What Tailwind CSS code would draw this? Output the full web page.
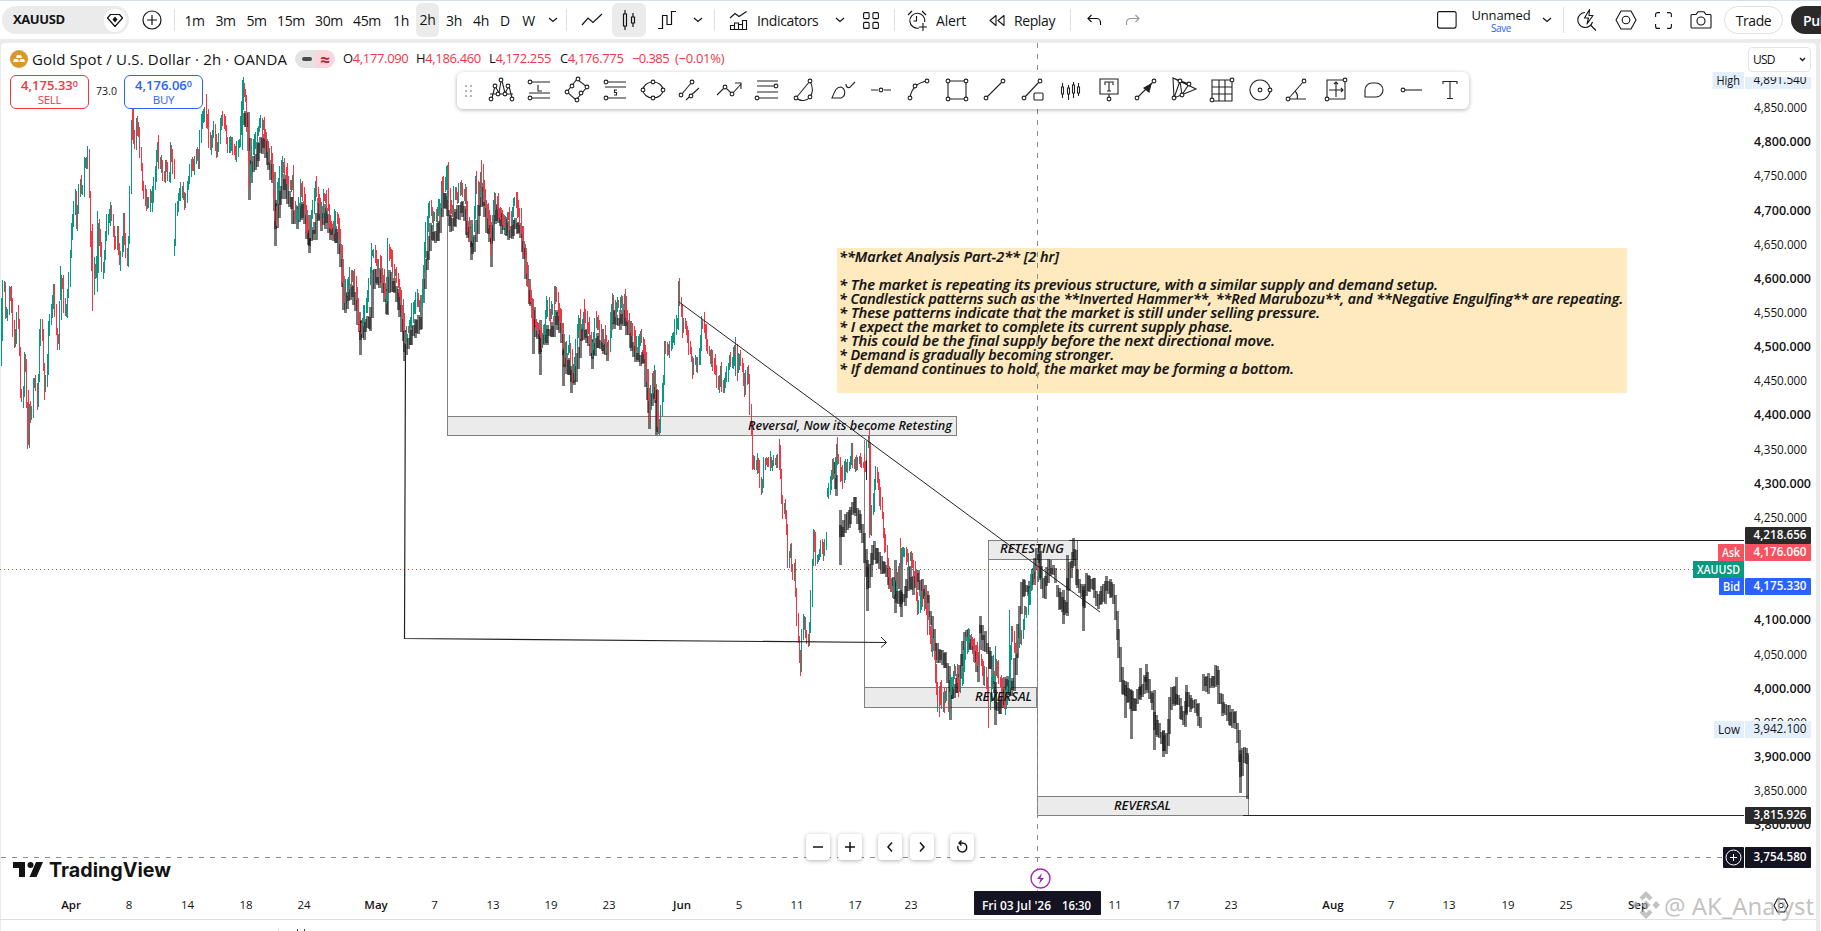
<!DOCTYPE html>
<html lang="en">
<head>
    <meta charset="UTF-8">
    <meta name="viewport" content="width=device-width, initial-scale=1.0">
    <script src="https://cdn.jsdelivr.net/npm/@tailwindcss/browser@4"></script>
    <title>XAUUSD 4,176.775 - TradingView</title>
</head>
<body class="w-[1821px] h-[931px] overflow-hidden bg-[#ebebeb] font-['Open_Sans',sans-serif] text-[#131313]">

<!-- top toolbar -->
<header class="h-[39px] flex items-center bg-white border-t border-[#d6deeb] text-[14px] font-medium tracking-[-0.4px] whitespace-nowrap overflow-hidden">
  <div class="ml-0.5 w-[127px] h-7 shrink-0 rounded-full bg-[#ebebeb] flex items-center justify-between pl-[11px] pr-[3px]">
    <span class="text-[13px] font-bold tracking-[-0.4px]">XAUUSD</span>
    <span class="w-[22px] h-[23px] rounded-full bg-white flex items-center justify-center">
      <svg width="18" height="18" viewBox="0 0 18 18" fill="none" stroke="#131313" stroke-width="1.2"><path d="M4.5 3.5h9l3 3.5L9 15.5 1.500 7z" stroke-linejoin="round"/><path d="M9 5.500l2.500 3L9 11.500 6.500 8.500z" fill="#131313" stroke="none"/></svg>
    </span>
  </div>
  <div class="w-[45px] shrink-0 flex justify-center">
    <svg width="20" height="20" viewBox="0 0 20 20" fill="none" stroke="#131313" stroke-width="1.2"><circle cx="10" cy="10" r="9"/><path d="M10 5v10M5 10h10"/></svg>
  </div>
  <div class="w-px h-[22px] bg-[#e0e0e0] shrink-0"></div>
  <div class="flex shrink-0 pl-1 text-center items-center">
    <span class="w-[31px]">1m</span><span class="w-[31px]">3m</span><span class="w-[31px]">5m</span>
    <span class="w-[38px]">15m</span><span class="w-[38px]">30m</span><span class="w-[38px]">45m</span>
    <span class="w-[30px]">1h</span>
    <span class="w-[23px] h-[34px] leading-[34px] rounded-md bg-[#ebebeb] font-medium">2h</span>
    <span class="w-[30px]">3h</span><span class="w-[24px]">4h</span><span class="w-[24px]">D</span><span class="w-[23px]">W</span>
  </div>
  <div class="w-[26px] flex justify-center shrink-0"><svg width="10" height="6" viewBox="0 0 10 6" fill="none" stroke="#131313" stroke-width="1.2"><path d="M1 1l4 3.500L9 1"/></svg></div>
  <div class="w-px h-[22px] bg-[#e0e0e0] shrink-0"></div>
  <div class="w-[45px] flex justify-center pl-1 shrink-0"><svg width="22" height="14" viewBox="0 0 22 14" fill="none" stroke="#131313" stroke-width="1.2"><path d="M1 12l6-7 5 4.500L21 1"/></svg></div>
  <div class="w-[34px] h-[34px] rounded-md bg-[#ebebeb] flex items-center justify-center shrink-0">
    <svg width="16" height="20" viewBox="0 0 16 20" fill="none" stroke="#131313" stroke-width="1.2"><path d="M2.500 4h3v12h-3zM4 0v4M4 16v4M10.500 7h3v6h-3zM12 3v4M12 13v4"/></svg>
  </div>
  <div class="w-[42px] flex justify-center shrink-0"><svg width="20" height="20" viewBox="0 0 20 20" fill="none" stroke="#131313" stroke-width="1.2"><path d="M1 18.500h4.500v-13h4.500v9h4.500V1.500H19"/></svg></div>
  <div class="w-[20px] flex justify-center shrink-0"><svg width="10" height="6" viewBox="0 0 10 6" fill="none" stroke="#131313" stroke-width="1.200"><path d="M1 1l4 3.500L9 1"/></svg></div>
  <div class="w-px h-[22px] ml-[6px] bg-[#e0e0e0] shrink-0"></div>
  <div class="ml-[14px] w-[104px] flex items-center gap-[9px] shrink-0">
    <svg width="19" height="19" viewBox="0 0 19 19" fill="none" stroke="#131313" stroke-width="1.1"><path d="M1 7l5-4.500 4 3L17.500.5M1.500 18.500v-4h4v4zM5.500 18.500v-6.500h4v6.500zM9.500 18.500v-5h4v5zM13.500 18.500v-9h4v9zM1 18.500h17"/></svg>
    <span class="text-[14px] tracking-[-0.35px]">Indicators</span>
  </div>
  <svg class="ml-[2px] shrink-0" width="10" height="6" viewBox="0 0 10 6" fill="none" stroke="#131313" stroke-width="1.2"><path d="M1 1l4 3.500L9 1"/></svg>
  <svg class="ml-[18px] shrink-0" width="16" height="17" viewBox="0 0 16 17" fill="none" stroke="#131313" stroke-width="1.1"><rect x=".6" y=".6" width="5.500" height="6" rx="1"/><rect x="9.900" y=".6" width="5.500" height="6" rx="1"/><rect x=".6" y="10.400" width="5.500" height="6" rx="1"/><rect x="9.900" y="10.400" width="5.500" height="6" rx="1"/></svg>
  <div class="w-px h-[22px] ml-[15px] bg-[#e0e0e0] shrink-0"></div>
  <svg class="ml-[12px] shrink-0" width="21" height="21" viewBox="0 0 21 21" fill="none" stroke="#131313" stroke-width="1.1"><path d="M12 18a7.500 7.500 0 1 1 5.700-6M9.500 6v5H6.500M1 5l4-4M15 1l4 4M16 13v8M12 17h8"/></svg>
  <span class="ml-[8px] w-[53px] shrink-0 tracking-[-0.2px]">Alert</span>
  <svg class="shrink-0" width="17" height="13" viewBox="0 0 17 13" fill="none" stroke="#131313" stroke-width="1.1"><path d="M7 1.500v10L1 6.500zM15 1.500v10L9 6.500z" stroke-linejoin="round"/></svg>
  <span class="ml-[8px] w-[56px] shrink-0">Replay</span>
  <div class="w-px h-[22px] bg-[#e0e0e0] shrink-0"></div>
  <svg class="ml-[16px] shrink-0" width="15" height="12" viewBox="0 0 15 12" fill="none" stroke="#131313" stroke-width="1.200"><path d="M4.500 1L1 4.500 4.500 8M1 4.500h8.500a4 4 0 0 1 4 4V11"/></svg>
  <svg class="ml-[23px] shrink-0" width="15" height="12" viewBox="0 0 15 12" fill="none" stroke="#999" stroke-width="1.200"><path d="M10.500 1L14 4.500 10.500 8M14 4.500H5.500a4 4 0 0 0-4 4V11"/></svg>
  <div class="ml-auto w-[384px] shrink-0 flex items-center">
    <svg class="shrink-0" width="20" height="18" viewBox="0 0 20 18" fill="none" stroke="#131313" stroke-width="1.100"><rect x=".6" y=".6" width="18.500" height="16.500" rx="2"/></svg>
    <div class="ml-[10px] w-[66px] pl-[2px] shrink-0 flex flex-col items-center">
      <span class="text-[13px] leading-[15px] tracking-[-0.100px]">Unnamed</span>
      <span class="text-[10px] leading-[10px] text-[#2962ff]">Save</span>
    </div>
    <svg class="ml-[9px] shrink-0" width="10" height="6" viewBox="0 0 10 6" fill="none" stroke="#131313" stroke-width="1.200"><path d="M1 1l4 3.500L9 1"/></svg>
    <div class="w-px h-[26px] ml-[11px] bg-[#e0e0e0] shrink-0"></div>
    <svg class="ml-[13px] shrink-0" width="21" height="24" viewBox="0 0 21 24" fill="none" stroke="#131313" stroke-width="1.100"><path d="M8 4.500a7.500 7.500 0 1 0 7.500 9.500M14 17.500l5 5M12.500 1.500L7.500 10h4l-1.500 6 6-8.500h-4z" stroke-linejoin="round"/></svg>
    <svg class="ml-[17px] shrink-0" width="22" height="20" viewBox="0 0 22 20" fill="none" stroke="#131313" stroke-width="1.100"><path d="M6 1h10l5 9-5 9H6l-5-9z" stroke-linejoin="round"/><circle cx="11" cy="10" r="3.800"/></svg>
    <svg class="ml-[18px] shrink-0" width="17" height="17" viewBox="0 0 17 17" fill="none" stroke="#131313" stroke-width="1.100"><path d="M.6 5V2.600a2 2 0 0 1 2-2H5M12 .6h2.400a2 2 0 0 1 2 2V5M16.400 12v2.400a2 2 0 0 1-2 2H12M5 16.400H2.600a2 2 0 0 1-2-2V12"/></svg>
    <svg class="ml-[18px] shrink-0" width="22" height="18" viewBox="0 0 22 18" fill="none" stroke="#131313" stroke-width="1.100"><path d="M1 4.500a1 1 0 0 1 1-1h4l2-2.700h6l2 2.700h4a1 1 0 0 1 1 1V16a1 1 0 0 1-1 1H2a1 1 0 0 1-1-1z"/><circle cx="11" cy="10" r="4"/></svg>
    <div class="ml-[12px] w-[59px] h-7 shrink-0 border border-[#e0e0e0] rounded-full flex items-center justify-center">Trade</div>
    <div class="ml-[8px] w-[84px] h-7 shrink-0 rounded-full bg-[#2a2a2a] text-white flex items-center pl-[12px] font-semibold">Publish</div>
  </div>
</header>

<!-- chart pane -->
<main class="relative mt-1 w-[1821px] h-[888px] flex">
  <div class="ml-px w-[1815px] h-full bg-white rounded-t"></div>
  <div class="ml-auto w-px h-full bg-white"></div>

  <svg id="chart" class="absolute left-0 -top-[43px]" width="1821" height="931" viewBox="0 0 1821 931" font-family="'Open Sans', sans-serif" fill="#131313">
    <!-- demand and supply zones -->
    <g fill="#ebebeb" stroke="#808080" shape-rendering="crispEdges">
      <rect x="447.500" y="416.500" width="509" height="19"/>
      <rect x="864.500" y="687.500" width="172" height="20"/>
      <rect x="988.500" y="540.500" width="89" height="19"/>
      <rect x="1037.500" y="796.500" width="211" height="19"/>
      <path d="M447.500 168V417M864.500 440V688M988.500 560V688M1248.500 755V797M1037.500 569V797"/>
    </g>
    <path d="M0 569.500H1694" stroke="#f23645" stroke-dasharray="1 3" shape-rendering="crispEdges"/>
    <g id="ghost" fill="#141414" fill-opacity=".57" shape-rendering="crispEdges"></g>
    <path id="up" stroke="#089981" fill="none" shape-rendering="crispEdges"/>
    <path id="down" stroke="#f23645" fill="none" shape-rendering="crispEdges"/>
    <!-- drawn lines -->
    <g stroke="#222" fill="none" stroke-width="1">
      <path d="M679 302L1100 612"/>
      <path d="M405.500 345L404.500 638.500L886 642.500" stroke-width="1.200"/>
      <path d="M881 637l5.500 5.500-5.500 5"/>
      <path d="M866.500 460V480M1069 540.500H1744M1243 815.500H1744" shape-rendering="crispEdges"/>
    </g>
    <g font-weight="600" font-style="italic" font-size="12">
      <text x="748" y="430" textLength="204" lengthAdjust="spacingAndGlyphs">Reversal, Now its become Retesting</text>
      <text x="1000" y="553" textLength="64" lengthAdjust="spacingAndGlyphs">RETESTING</text>
      <text x="975" y="701" textLength="57" lengthAdjust="spacingAndGlyphs">REVERSAL</text>
      <text x="1114" y="810" textLength="57" lengthAdjust="spacingAndGlyphs">REVERSAL</text>
    </g>
    <!-- analysis note -->
    <rect x="837" y="248" width="790" height="145" fill="#ffeac0"/>
    <g font-weight="600" font-style="italic" font-size="13.500" stroke="#131313" stroke-width=".2">
      <text x="839" y="262" textLength="220" lengthAdjust="spacingAndGlyphs">**Market Analysis Part-2** [2 hr]</text>
      <text x="839" y="290" textLength="599" lengthAdjust="spacingAndGlyphs">* The market is repeating its previous structure, with a similar supply and demand setup.</text>
      <text x="839" y="304" textLength="784" lengthAdjust="spacingAndGlyphs">* Candlestick patterns such as the **Inverted Hammer**, **Red Marubozu**, and **Negative Engulfing** are repeating.</text>
      <text x="839" y="318" textLength="481" lengthAdjust="spacingAndGlyphs">* These patterns indicate that the market is still under selling pressure.</text>
      <text x="839" y="332" textLength="394" lengthAdjust="spacingAndGlyphs">* I expect the market to complete its current supply phase.</text>
      <text x="839" y="346" textLength="436" lengthAdjust="spacingAndGlyphs">* This could be the final supply before the next directional move.</text>
      <text x="839" y="360" textLength="275" lengthAdjust="spacingAndGlyphs">* Demand is gradually becoming stronger.</text>
      <text x="839" y="374" textLength="455" lengthAdjust="spacingAndGlyphs">* If demand continues to hold, the market may be forming a bottom.</text>
    </g>
    <!-- crosshair -->
    <path d="M1037.500 43V892M1 857.500H1723" stroke="#8c8c8c" stroke-dasharray="5 6" fill="none" shape-rendering="crispEdges"/>
    <g id="prices" font-size="12"></g>
    <g id="tags" font-size="12"></g>
    <g id="dates" font-size="11.500" text-anchor="middle"></g>
    <path d="M0 919.500H1817" stroke="#e0e0e0"/>
    <path d="M278.500 928v3" stroke="#e0e0e0"/>
    <path d="M297.500 929v2M304.500 929v2" stroke="#444"/>
    <!-- crosshair date -->
    <rect x="974" y="891" width="127" height="24" rx="1" fill="#131322"/>
    <g fill="#fff" font-size="12" font-weight="600">
      <text x="982" y="910" textLength="69" lengthAdjust="spacingAndGlyphs">Fri 03 Jul '26</text>
      <text x="1062" y="910" textLength="29" lengthAdjust="spacingAndGlyphs">16:30</text>
    </g>
    <circle cx="1040.500" cy="878.500" r="9.500" fill="#fff" stroke="#9c27b0" stroke-width="1.400"/>
    <path d="M1042 873l-5 6h3.500l-1.500 5 5-6h-3.500z" fill="#9c27b0"/>
    <!-- crosshair price -->
    <rect x="1723" y="847" width="21" height="21" rx="1" fill="#131322"/>
    <g stroke="#fff" fill="none"><circle cx="1733.500" cy="857.500" r="7.500"/><path d="M1733.500 854v7M1730 857.500h7"/></g>
    <!-- axis settings -->
    <path d="M1777.500 899h7l3.500 6.500-3.500 6.500h-7l-3.500-6.500z" fill="none" stroke="#131313" stroke-width="1.100"/>
    <circle cx="1781" cy="905.500" r="2.300" fill="none" stroke="#131313"/>
    <!-- logo -->
    <path d="M13 862h12v15h-6v-9h-6zM36 862h7l-6.500 15h-7z"/><circle cx="30.500" cy="865" r="3"/>
    <text x="49" y="877" font-family="Inter, sans-serif" font-size="20" font-weight="700" textLength="122" lengthAdjust="spacingAndGlyphs">TradingView</text>
    <!-- author mark -->
    <g fill="#a8a8a8" fill-opacity=".7">
      <path d="M1646 891l6.500 6.500-3 3-3.500-3.500-3.500 3.500-3-3zM1646 900.500l4.500 4.500-4.500 4.500-4.500-4.500zM1636 901l3.500 4-3.500 4-4-4zM1656 901l4 4-4 4-3.500-4zM1639.500 912.500l3-3 3.500 3.500 3.500-3.500 3 3-6.500 6.500z"/>
      <text x="1664" y="915" font-size="23" font-family="'Noto Sans', sans-serif" textLength="150" lengthAdjust="spacingAndGlyphs">@ AK_Analyst</text>
    </g>
  </svg>

  <!-- legend -->
  <div class="absolute left-[10px] top-[4px] h-6 flex items-center whitespace-nowrap">
    <svg width="18" height="18" viewBox="0 0 18 18"><circle cx="9" cy="9" r="9" fill="#d9982c"/><path d="M7 5h4l1 3H6zM4 9h4l1 3H3zM10 9h4l1 3H9.500z" fill="#fff"/></svg>
    <span class="ml-1 w-[257px] text-[15px] tracking-[0.180px]">Gold Spot / U.S. Dollar · 2h · OANDA</span>
    <span class="ml-[6px] w-10 h-[18px] flex rounded-full overflow-hidden">
      <span class="w-5 bg-[#e3e3e3] flex items-center justify-center pl-1"><span class="w-[10px] h-[4px] rounded-sm bg-[#4a4a4a]"></span></span>
      <span class="w-5 bg-[#fbd5dc] flex items-center justify-center text-[#b22833] text-[17px] leading-none font-bold">≈</span>
    </span>
    <span class="flex ml-2 text-[13px] tracking-[-0.350px] text-[#f23645]">
      <span class="w-[73px]"><span class="text-[#131313]">O</span>4,177.090</span>
      <span class="w-[73px]"><span class="text-[#131313]">H</span>4,186.460</span>
      <span class="w-[71px]"><span class="text-[#131313]">L</span>4,172.255</span>
      <span class="w-[72px]"><span class="text-[#131313]">C</span>4,176.775</span>
      <span class="w-[43px] tracking-[-0.600px]">−0.385</span>
      <span class="tracking-[-0.300px]">(−0.01%)</span>
    </span>
  </div>
  <div class="absolute left-[10px] top-[32px] flex items-center text-center">
    <div class="w-[79px] h-[34px] border border-[#f23645] rounded-md bg-white text-[#f23645]">
      <div class="mt-px text-[13px] leading-[16px] font-semibold">4,175.33<sup class="text-[9px] -top-[3px]">0</sup></div>
      <div class="text-[11.500px] leading-[13px] tracking-[-0.300px]">SELL</div>
    </div>
    <span class="w-[35px] text-[10.500px]">73.0</span>
    <div class="w-[79px] h-[34px] border border-[#2962ff] rounded-md bg-white text-[#2962ff]">
      <div class="mt-px text-[13px] leading-[16px] font-semibold">4,176.06<sup class="text-[9px] -top-[3px]">0</sup></div>
      <div class="text-[11.500px] leading-[13px] tracking-[-0.300px]">BUY</div>
    </div>
  </div>

  <!-- currency select -->
  <div class="absolute left-[1745px] top-[3px] w-[68px] h-[31px] bg-white">
    <div class="ml-[3px] mt-px w-[63px] h-[25px] border border-[#e5e5e5] rounded flex items-center justify-between px-1 text-[12px] font-medium tracking-[-0.800px]">USD
      <svg width="7" height="5" viewBox="0 0 7 5" fill="none" stroke="#131313" stroke-width="1.300"><path d="M1 1l2.500 2.500L6 1"/></svg>
    </div>
  </div>

  <!-- drawing favourites -->
  <div class="absolute left-[457px] top-[29px] w-[1012px] h-[37px] rounded-md bg-white shadow-[0_1px_4px_rgba(0,0,0,0.3)] flex items-center">
    <svg class="ml-[7px] mr-[8px] shrink-0" width="10" height="14" viewBox="0 0 10 14" fill="#b5b5b5"><path d="M1 1h2v2H1zM6 1h2v2H6zM1 6h2v2H1zM6 6h2v2H6zM1 11h2v2H1zM6 11h2v2H6z"/></svg>
    <div id="tools" class="flex -mt-px"></div>
  </div>

  <!-- zoom and scroll -->
  <div class="absolute left-[806px] top-[791px] flex text-[#131313]">
    <span class="w-6 h-[26px] mr-2 rounded bg-white shadow-[0_1px_4px_rgba(0,0,0,0.3)] flex items-center justify-center"><svg width="12" height="12" fill="none" stroke="#131313" stroke-width="1.500"><path d="M1 6h10"/></svg></span>
    <span class="w-6 h-[26px] mr-4 rounded bg-white shadow-[0_1px_4px_rgba(0,0,0,0.3)] flex items-center justify-center"><svg width="12" height="12" fill="none" stroke="#131313" stroke-width="1.500"><path d="M1 6h10M6 1v10"/></svg></span>
    <span class="w-6 h-[26px] mr-2 rounded bg-white shadow-[0_1px_4px_rgba(0,0,0,0.3)] flex items-center justify-center"><svg width="12" height="12" fill="none" stroke="#131313" stroke-width="1.500"><path d="M8 1.500L4 6l4 4.500"/></svg></span>
    <span class="w-6 h-[26px] mr-4 rounded bg-white shadow-[0_1px_4px_rgba(0,0,0,0.3)] flex items-center justify-center"><svg width="12" height="12" fill="none" stroke="#131313" stroke-width="1.500"><path d="M4 1.500L8 6l-4 4.500"/></svg></span>
    <span class="w-6 h-[26px] rounded bg-white shadow-[0_1px_4px_rgba(0,0,0,0.3)] flex items-center justify-center"><svg width="12" height="14" fill="none" stroke="#131313" stroke-width="1.400"><path d="M2 6a4.500 4.500 0 1 0 4-3H3M5.500.5L3 3l2.500 2.500"/></svg></span>
  </div>
</main>

<script>
    // drawing tools, 28x28 each; c = anchor circles, p = strokes, f = solid parts
    const tools = [
      { p: 'M5 22L8 10M8 10L12 17M12 17L14 5M15 5L18 17M18 17L22 10M22 10L25 22M3 18h23', c: [[4,23],[8,10],[14,4],[21,10],[25,23],[11,18],[18,18]] },
      { p: 'M6 6h19M6 22h19M4 17h21M13 9v6h4', c: [[5,6],[5,22]] },
      { p: 'M14 3L4 16 13 24 24 11z', c: [[15,3],[4,16],[14,24],[24,11],[9,10],[18,17]] },
      { p: 'M6 6h19M4 11h21M6 22h19M16 14h-2.500v2.500h2v2.500H13', c: [[5,6],[5,22]] },
      { p: 'M14 6c6 0 10 4 10 8s-4 8-10 8S4 18 4 14s4-8 10-8z', c: [[14,6],[24,14],[14,22],[4,14]] },
      { p: 'M4 19L15 6M9 24L22 12', c: [[4,19],[15,6],[14,20]] },
      { p: 'M2 19l8-8 7 7 9-10M20 7h6v6', c: [[10,11],[17,18]] },
      { p: 'M4 5h21M4 10h19M4 16h21M6 22h19', c: [[23,10],[4,22]] },
      { p: 'M5 22L19 5M19 5c3 6 3 12 0 16M5 22c5 4 11 3 14-1', c: [[19,5],[19,21],[5,22]] },
      { p: 'M3 22h9c5-2 5-9 0-11-5 0-6 4-9 11zM17 8c0 5 4 4 5 2l4-4' },
      { p: 'M4 14h7M17 14h7', c: [[14,14]] },
      { p: 'M5 22c1-7 3-9 6-12M11 10c3-3 6-4 10-5', c: [[5,22],[10,10],[22,5]] },
      { p: 'M5 5h18v18H5z', c: [[5,5],[23,5],[5,23],[23,23]] },
      { p: 'M5 22L22 5', c: [[5,22],[22,5]] },
      { p: 'M5 22L21 5M16 17h7a1 1 0 0 1 1 1v5a1 1 0 0 1-1 1h-7a1 1 0 0 1-1-1v-5a1 1 0 0 1 1-1z', c: [[5,22],[21,5]] },
      { p: 'M4.500 11h2v7h-2zM5.500 7v4M5.500 18v4M10.500 12h2v6h-2zM11.500 9v3M11.500 18v6M15.500 9h2v8h-2zM16.500 6v3M16.500 17v5M20.500 11h2v6h-2zM21.500 7v4M21.500 17v3' },
      { p: 'M5 3h18v15H5zM10 9V6h8v3M14 6v9M12 15h4M14 18v4', c: [[14,23]] },
      { p: 'M5 22L22 5', c: [[5,22],[22,5]], f: 'M12 12l7-4-2 8z' },
      { p: 'M4 22L3 2l23 11zM10 5l2 14M4 22l6-17M12 19l7-11M3 2l16 6', c: [[4,22],[10,5],[12,19],[19,8]] },
      { p: 'M4 4h20v21H4zM11 4v21M17 4v21M4 11h20M4 18h20', c: [[24,4],[4,24]] },
      { p: 'M14 4a10 10 0 1 0 .1 0z', c: [[14,14],[24,14]] },
      { p: 'M4 23h18M5 22L20 5M11 15c2 2 3 5 2 8', c: [[4,23],[20,5]] },
      { p: 'M5 4h18v19H5zM14 6v15M7 14h14M12 8l2-2 2 2M19 12l2 2-2 2', c: [[23,4],[5,23]] },
      { p: 'M5 21v-7a7 7 0 0 1 7-7h4a7 7 0 0 1 0 14z' },
      { p: 'M6 14h18', c: [[5,14]] },
      { p: 'M7 8V5.500h14V8M14 5.500v17M11 22.500h6' }
    ];
    document.getElementById('tools').innerHTML = tools.map(t =>
      `<span class="w-[38px] flex justify-center -mr-[0.040px]"><svg width="28" height="28" viewBox="0 0 28 28" fill="none" stroke="#222" stroke-width="1.100"><path d="${t.p}"/>` +
      (t.f ? `<path d="${t.f}" fill="#222"/>` : '') +
      (t.c || []).map(c => `<circle cx="${c[0]}" cy="${c[1]}" r="1.900" fill="#fff"/>`).join('') + `</svg></span>`).join('');

    // price path, x y pairs; segments are split where the market gapped
    const price = [
      '1,340 2,290 3,277 5,315 8,308 9,290 12,315 14,350 16,315 18,325 20,395 22,400 24,355 26,370 27,430 28,442 29,405 31,425 33,375 35,385 37,405 39,340 40,315 42,340 44,390 46,385 48,330 50,320 53,295 55,325 58,345 60,300 61,270 63,300 65,322 67,290 69,265 71,230 73,212 75,200 76,225 79,182 82,190 84,152 86,168 88,146 89,225 91,250 92,300 94,265 96,280 97,218 99,240 101,265 103,270 106,225 108,215 110,208 112,225 114,240 117,238 119,258 121,255 123,218 125,250 127,265 129,210 130,130 132,112 134,148 136,118 138,130 140,160 142,182 144,200 147,208 149,195 152,200 155,165 157,146 159,168 161,165 163,178 165,162 168,185 170,150 172,162 174,172',
      '174,245 175,215 178,195 181,188 184,204 187,182 189,175 191,162 193,165 196,150 198,165 200,130 202,116 204,112 207,122 210,148 213,128 215,145 218,145 220,119 223,125 225,125 227,152 230,142 233,145 235,158 237,142 239,145 241,120 242,82 244,95 246,105 247,150 249,180 252,142 255,140 258,130 260,122 263,125 266,145 268,158 270,148 272,180 275,222 277,190 280,170 283,165 286,180 289,185 292,180 294,218 297,213 300,187 303,200 306,220 309,232 312,210 315,187 318,197 320,218 323,196 327,205 330,225 333,225 336,214 338,225 340,245 342,280 344,300 346,285 350,275 354,280 357,305 360,330 363,315 366,300 369,280 371,250 374,255 377,268 380,262 383,288 386,298 387,245 390,252 393,274 396,276 399,290 402,308 404,338 408,325 412,315 416,297 419,305 421,303 423,270 425,240 428,212 430,200 431,222 433,215 436,215 439,205 441,182 444,185 447,171 449,204 452,213 454,192 457,200 460,185 462,195 465,190 468,230 471,240 474,215 475,182 478,195 481,168 482,175 484,195 487,213 490,225 491,245 493,202 495,197 498,210 501,213 504,225 507,215 510,223 513,202 516,205 519,215 522,240 525,260 528,290 531,300 533,318 536,323 540,333 541,348 544,325 547,298 549,315 552,310 555,292 558,310 561,320 563,355 566,353 569,345 572,372 575,350 577,330 579,321 581,325 584,312 588,330 591,350 594,325 597,320 600,335 603,335 606,348 609,349 610,325 612,300 615,310 618,305 621,300 624,297 626,315 629,325 632,330 635,345 638,345 640,335 643,345 646,365 648,400 649,408 651,380 654,376 656,400 657,432 660,420 661,400 663,380 664,340 667,350 670,345 673,335 675,330 677,320 678,288 680,305 682,325 684,322 687,340 690,350 692,373 694,360 697,365 699,358 701,327 703,322 706,340 708,355 711,355 714,365 717,383 720,375 722,390 724,385 727,375 729,360 731,370 734,350 735,345 736,365 739,360 742,370 744,388 746,375 747,366 749,400 751,440 752,460 755,470 757,460 760,490 762,482 763,460 766,460 770,465 774,460 776,465 778,456 779,448 780,480 782,515 784,506 786,530 787,558 790,550 792,580 794,570 796,615 798,650 800,665 801,640 803,625 806,635 808,638 810,620 811,570 813,538 815,558 818,558 820,543 823,550 825,538 826,545',
      '827,492 830,480 832,465 834,475 836,450 839,465 842,478 845,466 848,468 851,456 854,465 858,463 861,462 865,468 866,446 868,442 869,445 870,530 871,510 873,500 875,473 877,477 879,490 881,510 883,530 886,555 889,580 892,593 895,577 898,583 900,556 904,552 907,560 910,560 913,565 915,588 917,603 920,600 923,600 925,597 927,620 930,640 933,650 935,675 937,695 939,688 941,698 944,698 946,694 948,706 950,690 953,672 955,670 957,685 959,690 961,680 963,660 966,642 969,637 972,640 975,650 977,662 980,655 983,678 985,675 988,705 990,690 993,670 996,667 999,680 1001,685 1004,706 1007,690 1009,670 1011,632 1014,645 1016,652 1018,642 1021,636 1023,622 1024,607 1026,610 1029,600 1031,582 1033,566 1035,570 1038,578'
    ];
    // wicks that stand out of the path: x, top, bottom, direction
    const wicks = [[1,298,366,1],[27,402,449,0],[60,266,300,1],[92,224,311,0],[97,211,292,1],[132,85,140,0],[206,94,128,0],[242,80,150,1],[387,238,290,1],[481,160,190,0],[491,225,256,0],[447,166,200,1],[554,286,310,0],[584,299,330,0],[678,282,307,1],[735,337,376,1],[779,441,470,0],[800,650,672,1],[837,437,465,1],[869,428,538,0],[900,538,570,0],[937,690,712,1],[939,690,717,0],[988,690,728,0],[995,646,680,1],[1005,690,715,1],[1009,610,690,1]];

    // projected bars, thick translucent
    const ghost = [
      '243,120 246,115 248,140 249,180 252,165 258,150 263,140 268,160 272,180 275,225 278,205 282,182 288,198 293,215 297,218 302,205 305,228 309,240 314,230 318,205 322,222 325,212 331,236 336,233 340,265 343,305 347,295 352,292 357,318 360,335 364,328 370,322 372,275 376,280 380,276 386,305 388,275 393,285 397,298 401,325 404,345 407,343 412,330 420,320 423,285 427,250 430,235 438,230 441,205 444,195 450,228 456,212 463,210 468,238 473,246 478,205 481,195 486,225 491,235 495,212 502,225 508,232 515,225 519,230 524,260 529,300 535,332 539,345 543,335 552,330 555,313 560,330 564,360 569,370 573,380 578,350 580,332 586,335 592,352 597,337 602,347 608,353',
      '611,320 618,322 624,312 630,343 636,358 643,358 647,395 649,410 652,392 655,392 657,425',
      '833,465 835,485 838,490', '840,535 843,527 848,518 852,508 854,502 857,518 861,530 864,560 867,585 869,570 872,547 875,552 880,562 885,570 890,583 895,590 900,598 904,595 908,572 912,588 916,572 921,590 925,595 930,618 934,648 938,658 944,660 948,682 952,698 956,682 960,670 963,635 970,640 976,665 978,678',
      '980,630 985,645 990,665 994,690 996,712 1002,700 1005,682 1012,690 1015,660 1018,625 1021,585 1025,592 1030,585 1034,562 1038,558 1042,594 1046,572 1052,570 1055,578',
      '1057,592 1063,610 1066,605 1068,570 1073,552 1076,580 1083,598 1087,577 1093,587 1097,600 1102,592 1108,585 1111,590 1114,605 1117,640 1119,665 1122,690 1126,690 1130,698 1133,705 1136,698 1141,692 1145,675 1149,693 1153,702',
      '1154,722 1160,733 1163,748 1167,732 1169,702 1172,693 1177,700 1183,718 1186,697 1190,703 1196,709 1199,722 1201,716', '1203,682 1208,685 1213,676 1217,674 1218,697 1225,710 1229,720 1233,713 1237,735 1239,762 1241,772 1242,756 1246,758'
    ];
    const ghostWicks = [[249,160,200],[275,200,246],[309,215,253],[360,320,355],[404,330,361],[471,220,260],[491,225,267],[533,310,354],[540,320,375],[563,350,386],[571,370,393],[592,340,369],[649,395,429],[656,390,435],[840,510,565],[867,560,611],[895,560,613],[901,560,617],[950,680,720],[980,616,650],[995,690,725],[1039,545,580],[1067,555,590],[1073,538,560],[1063,590,624],[1083,590,631],[1125,685,718],[1131,690,739],[1140,668,700],[1146,664,690],[1154,690,750],[1163,730,757],[1176,677,705],[1186,685,715],[1240,750,793],[1247,753,799]];

    let seed = 11;
    const rnd = () => (seed = (seed * 16807) % 2147483647) / 2147483647;
    function sample(str, step) {
      const k = str.split(' ').map(s => s.split(',').map(Number)), out = [];
      let i = 0;
      for (let x = k[0][0]; x <= k[k.length - 1][0]; x += step) {
        while (i < k.length - 2 && x > k[i + 1][0]) i++;
        const [a, b] = [k[i], k[i + 1]];
        out.push([x, a[1] + (b[1] - a[1]) * (x - a[0]) / (b[0] - a[0])]);
      }
      return out;
    }
    const paths = ['', ''];
    price.forEach(s => {
      const pts = sample(s, 1.27);
      let prev = pts[0][1];
      pts.forEach(([x, y]) => {
        const close = y + (rnd() - 0.5) * 7;
        const hi = Math.min(prev, close) - 3 - rnd() * rnd() * 12, lo = Math.max(prev, close) + 3 + rnd() * rnd() * 12;
        paths[close < prev ? 1 : 0] += `M${Math.round(x) + 0.5} ${Math.round(hi)}V${Math.round(lo)}`;
        prev = close;
      });
    });
    wicks.forEach(([x, a, b, d]) => paths[d] += `M${x + 0.5} ${a}V${b}`);
    document.getElementById('up').setAttribute('d', paths[1]);
    document.getElementById('down').setAttribute('d', paths[0]);

    let bars = '';
    const bar = (x, a, b) => bars += `<rect x="${Math.round(x) - 1}" y="${Math.round(a)}" width="3" height="${Math.round(b - a)}"/>`;
    ghost.forEach(s => {
      let prev = null;
      sample(s, 1.7).forEach(([x, y]) => {
        if (prev === null) prev = y;
        const close = y + (rnd() - 0.5) * 6;
        bar(x, Math.min(prev, close) - 2 - rnd() * 8, Math.max(prev, close) + 2 + rnd() * 8);
        prev = close;
      });
    });
    ghostWicks.forEach(w => bar(...w));
    document.getElementById('ghost').innerHTML = bars;

    // price scale
    let html = '';
    for (let i = 0; i < 22; i++) {
      const v = 4850 - i * 50;
      if (v === 4200 || v === 4150) continue;
      const bold = v % 100 === 0;
      html += `<text x="1754" y="${(112 + i * 34.160).toFixed(1)}" textLength="${bold ? 57 : 53}" lengthAdjust="spacingAndGlyphs" font-weight="${bold ? 600 : 400}">${v.toLocaleString('en-US')}.000</text>`;
    }
    document.getElementById('prices').innerHTML = html;
    const tags = [
      ['High', 1712.500, 72, '4,891.540', '#e3effd', '#131313'],
      ['', 0, 527, '4,218.656', '#2a2a2a', '#fff'],
      ['Ask', 1718, 544, '4,176.060', '#f7525f', '#fff'],
      ['XAUUSD', 1693, 561, '', '#089981', '#fff'],
      ['Bid', 1719, 578, '4,175.330', '#2962ff', '#fff'],
      ['Low', 1714, 721, '3,942.100', '#e3effd', '#131313'],
      ['', 0, 807, '3,815.926', '#2a2a2a', '#fff'],
      ['', 0, 847, '3,754.580', '#131322', '#fff']
    ];
    document.getElementById('tags').innerHTML = tags.map(([name, x, y, val, bg, fg]) => {
      const h = y === 847 ? 21 : 17, base = y + (h + 9) / 2 - 1, w = fg === '#fff' ? 600 : 400;
      return (name ? `<rect x="${x}" y="${y}" width="${1744 - x}" height="17" fill="${bg}"/><text x="${x + 4}" y="${base + 0.5}" fill="${fg}" font-weight="${w}" textLength="${1736 - x}" lengthAdjust="spacingAndGlyphs">${name}</text>` : '') +
        (val ? `<rect x="1745" y="${y}" width="66" height="${h}" rx="1" fill="${bg}"/><text x="1753.500" y="${base}" fill="${fg}" font-weight="${w}" textLength="53" lengthAdjust="spacingAndGlyphs">${val}</text>` : '');
    }).join('');

    // time scale
    const dates = [['Apr',71],['8',129],['14',187.5],['18',246],['24',304],['May',376],['7',434.5],['13',493],['19',551],['23',609],['Jun',682],['5',739],['11',797],['17',855],['23',911],['11',1115],['17',1173],['23',1231],['Aug',1333],['7',1391],['13',1449],['19',1508],['25',1566],['Sep',1638]];
    document.getElementById('dates').innerHTML = dates.map(([t, x]) => `<text x="${x}" y="909" font-weight="${isNaN(t) ? 600 : 400}">${t}</text>`).join('');
</script>
</body>
</html>
